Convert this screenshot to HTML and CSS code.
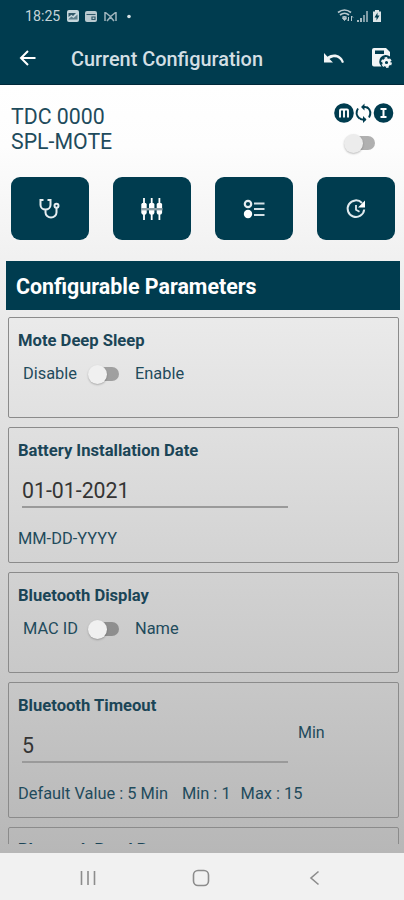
FILE: index.html
```html
<!DOCTYPE html>
<html lang="en">
<head>
    <meta charset="UTF-8">
    <meta name="viewport" content="width=device-width, initial-scale=1.0">
    <title>Current Configuration</title>
    <link rel="stylesheet" href="styles.css">
</head>
<body>
    <div class="status-bar">
        <span class="time">18:25</span>
        <svg class="notices" width="68" height="14" viewBox="0 0 68 14">
            <rect x="1" y="1" width="12" height="12" rx="2" fill="#c5d6dc"/>
            <path d="M2.500 4h7.500L7 7 5.500 5.800 2.500 8z" fill="#31596a"/>
            <path d="M2.500 10l3-2.500 2 1.500 4-3.500v5h-9z" fill="#5d7f8c"/>
            <rect x="19" y="2" width="12" height="11" rx="2" fill="#b9c9cf"/>
            <path d="M20.500 5.500h9M26 8h3v2.500h-3z" fill="none" stroke="#31596a" stroke-width="1.200"/>
            <path d="M39 3v9M50 3v9M39.500 3.500l5 4 5-4M41 12l3.500-4 3.500 4" fill="none" stroke="#9fb4bc" stroke-width="1.500"/>
            <circle cx="63" cy="7.500" r="1.800" fill="#d5e0e4"/>
        </svg>
        <svg class="signals" width="46" height="16" viewBox="0 0 46 16">
            <path d="M1 4.500q6.500-5 13 0M3 7q4.500-3.500 9 0M5.500 9.500q2-1.500 4 0" fill="none" stroke="#b9c9cf" stroke-width="1.700"/>
            <path d="M7.500 12.500l-2-2.500h4zM11.500 13V9M10 11.500l1.500 1.500M14.500 8v5M14.500 8L16 9.500" fill="#b9c9cf" stroke="#b9c9cf"/>
            <path d="M21 14v-2M24 14v-4" stroke="#a5bac1" stroke-width="2"/>
            <path d="M27 14V7M30 14V3" stroke="#7e9ba5" stroke-width="2"/>
            <path d="M38 2h4v1.500h2V14h-8V3.500h2z" fill="#dce5e8"/>
            <path d="M40.500 4.500L37.500 9.500h2v3l3-5h-2z" fill="#003c4f"/>
        </svg>
    </div>

    <header class="app-bar">
        <svg class="back" width="18" height="16" viewBox="0 0 18 16">
            <path d="M9 1L2 8l7 7M2 8h14.500" fill="none" stroke="#fff" stroke-width="2"/>
        </svg>
        <h1>Current Configuration</h1>
        <svg class="undo" width="22" height="12" viewBox="0 0 22 12">
            <path d="M1 1v9.500h9L6.500 7C11 3.500 17 5 19 11l2-.7C18.500 2.500 10.500.500 4.500 4.800z" fill="#f2f5f6"/>
        </svg>
        <svg class="save" width="22" height="22" viewBox="0 0 22 22">
            <path d="M3 1h12l4 4v4.500a6 6 0 0 0-8.500 10H3a2 2 0 0 1-2-2V3a2 2 0 0 1 2-2z" fill="#f2f5f6"/>
            <path d="M4 3.500h9v3.500H4z" fill="#003c4f"/>
            <circle cx="15.500" cy="15.500" r="2.900" fill="none" stroke="#f2f5f6" stroke-width="2.600"/>
            <circle cx="15.500" cy="15.500" r="4.600" fill="none" stroke="#f2f5f6" stroke-width="1.600" stroke-dasharray="2.600 2.217"/>
        </svg>
    </header>

    <main class="screen">
        <section class="device">
            <div class="device-name">TDC 0000<br>SPL-MOTE</div>
            <div class="units">
                <svg width="60" height="22" viewBox="0 0 60 22">
                    <circle cx="10" cy="11" r="9.800" fill="#003c4f"/>
                    <path d="M6 15.500V8.500q0-1 1-1h6q1 0 1 1v7M10 7.500v8" fill="none" stroke="#fff" stroke-width="1.900"/>
                    <path d="M25.500 16.500q-5-4.500-1.500-10M33 5q5.500 4.500 2 10.500" fill="none" stroke="#003c4f" stroke-width="1.900"/>
                    <path d="M28 5h3q2 0 3 1.500M31.500 17.500h-3q-2 0-3-1.500" fill="none" stroke="#003c4f" stroke-width="1.900"/>
                    <path d="M30.500 1.500v7L27 5zM29 14v7l3.500-3.500z" fill="#003c4f"/>
                    <circle cx="49.500" cy="11" r="9.800" fill="#003c4f"/>
                    <path d="M46.500 7h6M46.500 15h6M49.500 7v8" stroke="#fff" stroke-width="2"/>
                </svg>
                <span class="switch"></span>
            </div>
        </section>

        <nav class="actions">
            <button class="action">
                <svg width="24" height="24" viewBox="0 0 24 24" fill="none" stroke="#e6edf0" stroke-width="2">
                    <path d="M5.500 3H2.500v5a5 4.500 0 0 0 10 0V3h-3M7.500 12.500v3a5.500 5 0 0 0 11 0V11"/>
                    <circle cx="18.500" cy="8.800" r="2"/>
                </svg>
            </button>
            <button class="action">
                <svg width="24" height="24" viewBox="0 0 24 24">
                    <path d="M4 1v22M11.700 1v22M19.400 1v22" stroke="#fff" stroke-width="1.800"/>
                    <path d="M1.300 7l1-1h3.400l1 1v9l-1 1.500H2.300l-1-1.500zM9 7l1-1h3.400l1 1v9l-1 1.500H10L9 16zM16.700 7l1-1h3.400l1 1v9l-1 1.500h-3.400l-1-1.500z" fill="#fff"/>
                    <path d="M1 12.200h21.500" stroke="#8b9da4" stroke-width="2.400"/>
                </svg>
            </button>
            <button class="action">
                <svg width="24" height="24" viewBox="0 0 24 24">
                    <circle cx="6" cy="7" r="3.200" fill="none" stroke="#e6edf0" stroke-width="2.200"/>
                    <circle cx="6" cy="17" r="4.200" fill="#fff"/>
                    <path d="M12 6.500h10.500M12 12h10.500M12 18h10.500" stroke="#d3e0e5" stroke-width="2.200"/>
                </svg>
            </button>
            <button class="action">
                <svg width="24" height="24" viewBox="0 0 24 24">
                    <path d="M18 6a8.300 8.300 0 1 0 2.200 6.500" fill="none" stroke="#e0eaee" stroke-width="2"/>
                    <path d="M21 3.500v7h-7z" fill="#fff"/>
                    <path d="M12 8v4.800l3.500 2" fill="none" stroke="#e0eaee" stroke-width="1.800"/>
                </svg>
            </button>
        </nav>

        <h2 class="section-title">Configurable Parameters</h2>

        <div class="params">
            <section class="card card-switch">
                <h3>Mote Deep Sleep</h3>
                <div class="toggle-row">
                    <span class="off">Disable</span>
                    <span class="switch"></span>
                    <span class="on">Enable</span>
                </div>
            </section>

            <section class="card card-input">
                <h3>Battery Installation Date</h3>
                <div class="field-row">
                    <div class="field">01-01-2021</div>
                </div>
                <p class="hint">MM-DD-YYYY</p>
            </section>

            <section class="card card-switch">
                <h3>Bluetooth Display</h3>
                <div class="toggle-row">
                    <span class="off">MAC ID</span>
                    <span class="switch"></span>
                    <span class="on">Name</span>
                </div>
            </section>

            <section class="card card-input">
                <h3>Bluetooth Timeout</h3>
                <div class="field-row">
                    <div class="field">5</div>
                    <span class="unit">Min</span>
                </div>
                <p class="hint"><span>Default Value : 5 Min</span><span>Min : 1</span><span class="max">Max : 15</span></p>
            </section>

            <section class="card card-switch card-last">
                <h3>Bluetooth Baud Rate</h3>
            </section>
        </div>
    </main>

    <footer class="nav-bar">
        <svg width="16" height="16" viewBox="0 0 16 16">
            <path d="M1.500 1v14M8 1v14M14.500 1v14" stroke="#8c8c8c" stroke-width="1.600"/>
        </svg>
        <svg width="18" height="18" viewBox="0 0 18 18">
            <rect x="1.500" y="1.500" width="15" height="15" rx="4.500" fill="none" stroke="#8c8c8c" stroke-width="1.600"/>
        </svg>
        <svg width="16" height="16" viewBox="0 0 16 16">
            <path d="M12.500 1.500L5 8l7.500 6.500" fill="none" stroke="#8c8c8c" stroke-width="1.600"/>
        </svg>
    </footer>
</body>
</html>
```
FILE: styles.css
```css
* {
    box-sizing: border-box;
}
body {
    margin: 0;
    width: 404px;
    height: 900px;
    overflow: hidden;
    display: flex;
    flex-direction: column;
    font-family: Roboto, sans-serif;
    color: #1f4b5c;
}
h1, h2, h3, p {
    margin: 0;
}
svg {
    display: block;
    flex: none;
}
.status-bar {
    height: 32px;
    background-color: #003c4f;
    display: flex;
    align-items: center;
    padding: 0 21px 0 25px;
}
.time {
    font-size: 14.2px;
    color: #c5d3d8;
    width: 41px;
}
.signals {
    margin-left: auto;
}
.app-bar {
    height: 53px;
    background-color: #003c4f;
    border-bottom: 1px solid #00293a;
    display: flex;
    align-items: center;
    padding: 0 11px 0 19px;
}
.app-bar h1 {
    font-size: 19.9px;
    font-weight: 500;
    color: #d3dfe4;
    margin-left: 34px;
    padding-top: 2px;
    flex: 1;
}
.save {
    margin-left: 26px;
}
.screen {
    height: 768px;
    overflow: hidden;
    background: linear-gradient(#fff 0%, #fdfdfd 8%, #e9e9e9 32%, #b7b7b7 100%);
}
.device {
    height: 92px;
    display: flex;
    justify-content: space-between;
    padding: 19px 10px 0 11px;
}
.device-name {
    font-size: 21.3px;
    line-height: 25px;
}
.units {
    width: 60px;
    display: flex;
    flex-direction: column;
    align-items: center;
    margin-top: -2px;
}
.switch {
    position: relative;
    width: 29px;
    height: 14px;
}
.switch::before {
    content: "";
    position: absolute;
    left: 6px;
    top: 0;
    width: 24px;
    height: 14px;
    border-radius: 7px;
    background-color: rgba(0, 0, 0, 0.3);
}
.switch::after {
    content: "";
    position: absolute;
    left: -1px;
    top: -2px;
    width: 19px;
    height: 19px;
    border-radius: 50%;
    background-color: #ececec;
    box-shadow: 0 1px 2px rgba(0, 0, 0, 0.25);
}
.units .switch {
    margin: 12px 10px 0 0;
}
.actions {
    display: flex;
    justify-content: space-between;
    padding: 0 9px 0 11px;
}
.action {
    width: 78px;
    height: 63px;
    border: none;
    border-radius: 9px;
    background-color: #003c4f;
    padding: 0;
    display: flex;
    justify-content: center;
    align-items: center;
}
.section-title {
    height: 49px;
    margin: 21px 4px 0 6px;
    padding-left: 10px;
    background-color: #003c4f;
    color: #fff;
    font-size: 21.4px;
    font-weight: 700;
    line-height: 52px;
}
.params {
    height: 527px;
    margin: 7px 5px 0 8px;
    overflow: hidden;
    display: flex;
    flex-direction: column;
    gap: 9px;
}
.card {
    flex: none;
    border: 1.5px solid #8b8b8b;
    border-radius: 2px;
    padding: 12px 9px 0;
}
.card-switch {
    height: 101px;
}
.card-input {
    height: 136px;
}
.card-last {
    padding-top: 11px;
}
.card h3 {
    font-size: 16.6px;
    font-weight: 700;
    line-height: 22px;
    color: #1b4557;
}
.toggle-row {
    display: flex;
    align-items: center;
    margin-top: 11px;
    padding-left: 5px;
    font-size: 16.4px;
    line-height: 22px;
}
.toggle-row .off {
    width: 66px;
}
.toggle-row .switch {
    margin-top: 0;
}
.toggle-row .on {
    margin-left: 17px;
}
.toggle-row .switch::after {
    background-color: #f0f0f0;
}
.field-row {
    display: flex;
    height: 46px;
    margin-left: 4px;
}
.field {
    width: 266px;
    height: 46px;
    padding-top: 17px;
    border-bottom: 2px solid #9a9a9a;
    font-size: 21.3px;
    line-height: 24px;
    color: #343434;
}
.unit {
    margin: 5px 0 0 10px;
    font-size: 16px;
    line-height: 22px;
}
.hint {
    display: flex;
    gap: 14px;
    margin-top: 20px;
    font-size: 16.4px;
    line-height: 22px;
}
.hint .max {
    margin-left: -4px;
}
.nav-bar {
    height: 47px;
    background-color: #f1f1f1;
    display: flex;
    justify-content: space-between;
    align-items: center;
    padding: 3px 82px 0 80px;
}
```
